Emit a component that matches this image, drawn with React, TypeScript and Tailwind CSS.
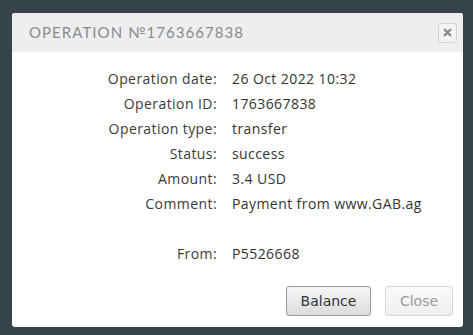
const rows = [
  { label: 'Operation date:', value: '26 Oct 2022 10:32' },
  { label: 'Operation ID:', value: '1763667838' },
  { label: 'Operation type:', value: 'transfer' },
  { label: 'Status:', value: 'success' },
  { label: 'Amount:', value: '3.4 USD' },
  { label: 'Comment:', value: 'Payment from www.GAB.ag' },
  { label: '', value: '' },
  { label: 'From:', value: 'P5526668' },
];

export default function App() {
  return (
    <div className="w-[473px] h-[335px] bg-[#36434b] pt-[13px] pl-[12px] overflow-hidden">
      <div className="w-[451px] h-[314px] bg-white rounded-[3px] overflow-hidden flex flex-col">
        <div className="h-[39px] bg-[#eeeeee] flex items-center justify-between pl-[17px] pr-[6px]">
          <span className="font-['Lato',sans-serif] text-[15px] tracking-[0.07em] text-[#8b8b8b] uppercase">
            Operation №1763667838
          </span>
          <button className="w-[19px] h-[20px] rounded-[3px] border border-[#d2d2d2] bg-[#f3f3f3] flex items-center justify-center">
            <svg width="9" height="9" viewBox="0 0 10 10">
              <path d="M2 2 L8 8 M8 2 L2 8" stroke="#8a8a8a" strokeWidth="2.6" strokeLinecap="round" />
            </svg>
          </button>
        </div>
        <div className="pt-[14px] grid grid-cols-[205px_1fr] gap-x-[15px] font-['Open_Sans',sans-serif] text-[14px] tracking-[0.03em] leading-[25px] text-[#333]">
          {rows.map((r, idx) => (
            <div key={idx} className="contents">
              <span className="text-right h-[25px] text-[#3a3a3a]">{r.label}</span>
              <span className="h-[25px]">{r.value}</span>
            </div>
          ))}
        </div>
        <div className="mt-auto flex justify-end gap-[14px] pr-[10px] pb-[11px] font-['DejaVu_Sans',sans-serif] text-[14px]">
          <button className="w-[85px] h-[30px] rounded-[3px] border border-[#9a9a9a] bg-gradient-to-b from-[#f7f7f7] to-[#dcdcdc] text-[#333]">
            Balance
          </button>
          <button className="w-[68px] h-[30px] rounded-[3px] border border-[#d6d6d6] bg-gradient-to-b from-[#fbfbfb] to-[#efefef] text-[#9a9a9a]">
            Close
          </button>
        </div>
      </div>
    </div>
  );
}
